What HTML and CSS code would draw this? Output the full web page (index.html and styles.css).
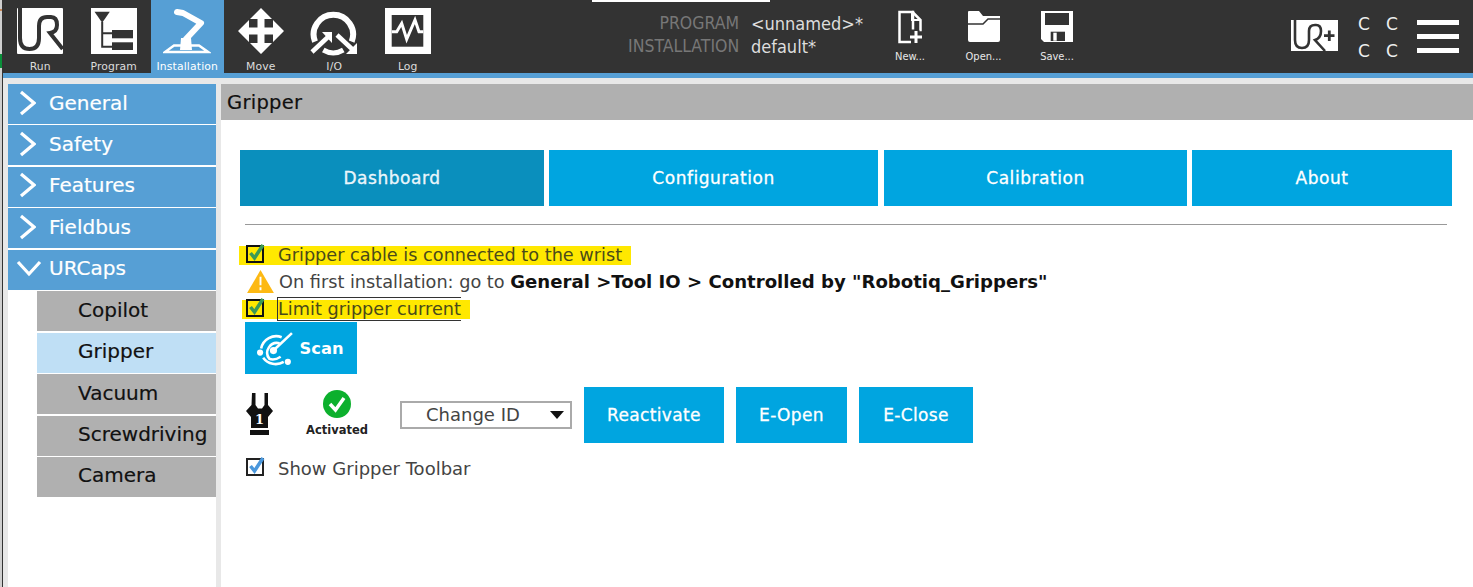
FILE: index.html
```html
<!DOCTYPE html>
<html lang="en">
<head>
<meta charset="utf-8">
<title>Gripper</title>
<link rel="stylesheet" href="styles.css">
</head>
<body>
<div class="edge-mark edge-orange"></div>
<div class="edge-mark edge-green"></div>
<div class="app">
  <div class="top-notch"></div>
  <header class="header">
    <nav class="nav">
      <a class="nav-tab">
        <svg class="nav-icon" viewBox="0 0 48 48"><rect x="1" width="46" height="46" rx="1" fill="#fff"/><path d="M4 0V30Q4 41 13.500 41Q23 41 23 30V18Q23 9 31 9H35Q41 9 41 17Q41 24 34 25L46.700 41" fill="none" stroke="#333" stroke-width="4"/></svg>
        <span>Run</span>
      </a>
      <a class="nav-tab">
        <svg class="nav-icon" viewBox="0 0 48 48"><rect x="1" width="46" height="46" fill="#fff"/><path d="M4.500 3.700H19.800L12.200 14.700Z" fill="#333"/><path d="M12.200 14V38.700H22M12.200 25.300H22" fill="none" stroke="#333" stroke-width="2"/><rect x="22" y="22" width="21" height="8.300" fill="#333"/><rect x="22" y="34.300" width="21" height="7.700" fill="#333"/></svg>
        <span>Program</span>
      </a>
      <a class="nav-tab active">
        <svg class="nav-icon" viewBox="0 0 48 48"><path d="M2 44H45L36 37.500H11Z" fill="none" stroke="#fff" stroke-width="2.500"/><path d="M18 30H28L29 42H17Z" fill="#fff"/><path d="M23 31L38 15L20 5L14 4" fill="none" stroke="#fff" stroke-width="6" stroke-linejoin="round" stroke-linecap="round"/></svg>
        <span>Installation</span>
      </a>
      <a class="nav-tab">
        <svg class="nav-icon" viewBox="0 0 48 48"><path d="M24 0L35 11H27.500V19.500H36V12L47 23L36 34V26.500H27.500V35H35L24 46L13 35H20.500V26.500H12V34L1 23L12 12V19.500H20.500V11H13Z" fill="#fff"/></svg>
        <span>Move</span>
      </a>
      <a class="nav-tab">
        <svg class="nav-icon" viewBox="0 0 48 48"><path d="M5 33.700A19.700 19.700 0 1 1 41.700 33.700" fill="none" stroke="#fff" stroke-width="6"/><path d="M13.300 42A19.700 19.700 0 0 0 33.300 42" fill="none" stroke="#fff" stroke-width="5"/><path d="M2 44L18 29" stroke="#fff" stroke-width="4.500"/><path d="M12 24H22V35Z" fill="#fff"/><path d="M27 27L42 41" stroke="#fff" stroke-width="4.500"/><path d="M47 35V46H36Z" fill="#fff"/></svg>
        <span>I/O</span>
      </a>
      <a class="nav-tab">
        <svg class="nav-icon" viewBox="0 0 48 48"><rect x="1" width="46" height="46" fill="#fff"/><rect x="7.700" y="7" width="31.600" height="31.700" fill="#333"/><path d="M7.700 23.700H12.700L17.700 15.300L22.700 31.300L31 12L35 23.700H39.300" fill="none" stroke="#fff" stroke-width="3"/></svg>
        <span>Log</span>
      </a>
    </nav>
    <div class="names">
      <div class="name-row"><span class="name-key">PROGRAM</span><span class="name-val">&lt;unnamed&gt;*</span></div>
      <div class="name-row"><span class="name-key">INSTALLATION</span><span class="name-val">default*</span></div>
    </div>
    <div class="files">
      <a class="file-btn">
        <svg class="file-icon" viewBox="0 0 24 34"><path d="M15 19.500V2H1.500V32H13" fill="none" stroke="#fff" stroke-width="2.500"/><path d="M14 1.500L22.500 10V20H21.500" fill="none" stroke="#fff" stroke-width="2.500"/><path d="M14 3V10H22" fill="none" stroke="#fff" stroke-width="2"/><path d="M18 21V33M12 27H24" stroke="#fff" stroke-width="3"/></svg>
        <span>New...</span>
      </a>
      <a class="file-btn">
        <svg class="file-icon" viewBox="0 0 34 34"><path d="M1 2Q1 1 2 1H12L16 6H33V30Q33 32 31 32H3Q1 32 1 30Z" fill="#fff"/><path d="M1 14H16L21 9H33" fill="none" stroke="#333" stroke-width="1.500"/></svg>
        <span>Open...</span>
      </a>
      <a class="file-btn">
        <svg class="file-icon" viewBox="0 0 34 34"><path d="M1 1H33V32H4L1 29Z" fill="#fff"/><rect x="5" y="3" width="24" height="12" fill="#333"/><rect x="10.700" y="21.700" width="14.300" height="9.300" fill="#333"/><rect x="13.300" y="22.700" width="3.400" height="8" fill="#fff"/></svg>
        <span>Save...</span>
      </a>
    </div>
    <div class="sys">
      <svg class="urplus" viewBox="0 0 48 33"><rect width="47" height="31" fill="#fff"/><path d="M4 0V20Q4 28 11 28Q18 28 18 20V11Q18 5 24 5H25Q30 5 30 11Q30 18 24 20L34 31" fill="none" stroke="#333" stroke-width="2.600"/><path d="M38.300 10.500V21M33 15.700H43.500" stroke="#333" stroke-width="2.800"/></svg>
      <div class="cc"><span>C</span><span>C</span><span>C</span><span>C</span></div>
      <div class="burger"><i></i><i></i><i></i></div>
    </div>
  </header>
  <div class="strip"></div>
  <div class="workspace">
    <aside class="side">
      <a class="side-item"><svg class="chev" viewBox="0 0 18 26"><path d="M3 2L16 13L3 24" fill="none" stroke="#fff" stroke-width="3.200"/></svg>General</a>
      <a class="side-item"><svg class="chev" viewBox="0 0 18 26"><path d="M3 2L16 13L3 24" fill="none" stroke="#fff" stroke-width="3.200"/></svg>Safety</a>
      <a class="side-item"><svg class="chev" viewBox="0 0 18 26"><path d="M3 2L16 13L3 24" fill="none" stroke="#fff" stroke-width="3.200"/></svg>Features</a>
      <a class="side-item"><svg class="chev" viewBox="0 0 18 26"><path d="M3 2L16 13L3 24" fill="none" stroke="#fff" stroke-width="3.200"/></svg>Fieldbus</a>
      <a class="side-item"><svg class="chev-down" viewBox="0 0 26 18"><path d="M2 3L13 15L24 3" fill="none" stroke="#fff" stroke-width="3.200"/></svg>URCaps</a>
      <a class="sub-item">Copilot</a>
      <a class="sub-item current">Gripper</a>
      <a class="sub-item">Vacuum</a>
      <a class="sub-item">Screwdriving</a>
      <a class="sub-item">Camera</a>
    </aside>
    <main class="main">
      <h1 class="title">Gripper</h1>
      <div class="panel">
        <div class="tabs">
          <a class="tab tab-1 selected">Dashboard</a>
          <a class="tab tab-2">Configuration</a>
          <a class="tab tab-3">Calibration</a>
          <a class="tab tab-4">About</a>
        </div>
        <hr class="rule">
        <div class="line line-a">
          <span class="mark wide">
            <svg class="check" viewBox="0 0 20 22"><rect x="1" y="4" width="16" height="16" fill="none" stroke="#111" stroke-width="2"/><path d="M4.500 11L8.500 16L17 3" fill="none" stroke="#3c9a55" stroke-width="3.500"/></svg>
            <span>Gripper cable is connected to the wrist</span>
          </span>
        </div>
        <div class="line line-b">
          <svg class="warn" viewBox="0 0 28 24"><path d="M14 0L28 24H0Z" fill="#fdb913"/><path d="M14 7V16M14 18V21" stroke="#fff" stroke-width="2"/></svg>
          <span>On first installation: go to <b>General &gt;Tool IO &gt; Controlled by "Robotiq_Grippers"</b></span>
        </div>
        <div class="line line-c">
          <span class="mark narrow">
            <svg class="check" viewBox="0 0 20 22"><rect x="1" y="4" width="16" height="16" fill="none" stroke="#111" stroke-width="2"/><path d="M4.500 11L8.500 16L17 3" fill="none" stroke="#3c9a55" stroke-width="3.500"/></svg>
            <span class="focus">Limit gripper current</span>
          </span>
        </div>
        <a class="btn scan">
          <svg class="scan-icon" viewBox="0 0 36 36"><path d="M34 3L17 19" stroke="#fff" stroke-width="2.500"/><circle cx="16" cy="20" r="3.500" fill="#fff"/><path d="M24 7A15 15 0 0 0 4 18M6 27A15 15 0 0 0 26 31" fill="none" stroke="#fff" stroke-width="2.500"/><path d="M22 13A9.500 9.500 0 0 0 12 28Q17 30 23 26" fill="none" stroke="#fff" stroke-width="2.500"/><circle cx="3" cy="22" r="3" fill="#fff"/><circle cx="30" cy="31" r="3" fill="#fff"/></svg>
          <span>Scan</span>
        </a>
        <div class="controls">
          <svg class="gripper" viewBox="0 0 28 44"><path d="M6 0H9.500V12L12 15.500H16L18.500 12V0H22V12L27 18L22 24V35H5V24L0 18L5.500 12Z" fill="#111"/><rect x="4" y="37" width="19" height="5" fill="#111"/><text x="13.500" y="31" class="grip-num">1</text></svg>
          <div class="status">
            <svg class="ok" viewBox="0 0 28 28"><circle cx="14" cy="14" r="14" fill="#0cb02d"/><path d="M7 14L12.500 20L21 8" fill="none" stroke="#fff" stroke-width="3.500"/></svg>
            <span>Activated</span>
          </div>
          <div class="select"><span>Change ID</span><i class="caret"></i></div>
          <a class="btn act act-1">Reactivate</a>
          <a class="btn act act-2">E-Open</a>
          <a class="btn act act-3">E-Close</a>
        </div>
        <div class="line line-d">
          <svg class="check" viewBox="0 0 20 22"><rect x="1" y="4" width="16" height="16" fill="none" stroke="#222" stroke-width="2"/><path d="M4.500 11L8.500 16L17 3" fill="none" stroke="#4a97dc" stroke-width="3.500"/></svg>
          <span>Show Gripper Toolbar</span>
        </div>
      </div>
    </main>
  </div>
</div>
</body>
</html>
```
FILE: styles.css
```css
* { box-sizing: border-box; }
html, body { margin: 0; height: 100%; overflow: hidden; }
body { background: #cfcfcf; font-family: "DejaVu Sans", sans-serif; position: relative; }
.edge-mark { position: absolute; left: 0; width: 2px; }
.edge-orange { top: 9px; height: 2px; background: #c98a5a; }
.edge-green { top: 54px; height: 14px; background: #0a8f3a; }
.app { position: relative; width: 1471px; height: 587px; margin-left: 2px; border-left: 1px solid #333; display: flex; flex-direction: column; background: #fff; }
.top-notch { position: absolute; left: 589px; top: 0; width: 178px; height: 2px; background: #fff; }

.header { height: 73px; background: #333; display: flex; flex: none; }
.nav { display: flex; padding-left: 0.500px; }
.nav-tab { width: 73.500px; height: 73px; display: flex; flex-direction: column; align-items: center; padding-top: 8px; color: #ddd; font-size: 10.800px; }
.nav-tab span { margin-top: 4px; line-height: 13px; white-space: nowrap; letter-spacing: .15px; }
.nav-tab.active { background: #569fd5; color: #fff; }
.nav-icon { width: 48px; height: 48px; flex: none; }

.names { margin-left: 183.500px; width: 235px; padding-top: 13px; font-family: "DejaVu Sans Condensed", "DejaVu Sans", sans-serif; font-size: 18px; flex: none; }
.name-row { display: flex; height: 22.500px; line-height: 21px; }
.name-key { width: 111px; margin-right: 12px; text-align: right; color: #777; white-space: nowrap; font-size: 17.500px; }
.name-val { color: #ddd; white-space: nowrap; }

.files { display: flex; width: 220.500px; margin-left: 10.250px; flex: none; }
.file-btn { width: 73.500px; display: flex; flex-direction: column; align-items: center; padding-top: 10px; color: #e8e8e8; font-size: 11px; font-family: "DejaVu Sans Condensed", "DejaVu Sans", sans-serif; }
.file-btn span { margin-top: 6px; line-height: 14px; }
.file-icon { width: 34px; height: 34px; flex: none; }

.sys { display: flex; margin-left: 197.250px; padding-top: 20px; flex: none; }
.urplus { width: 48px; height: 33px; }
.cc { display: grid; grid-template-columns: 28px 28px; grid-auto-rows: 27px; margin: -9px 0 0 19px; color: #eee; font-size: 17px; line-height: 27px; }
.burger { display: flex; flex-direction: column; gap: 9.500px; width: 42px; margin-left: 3px; }
.burger i { display: block; height: 4.500px; background: #fff; }

.strip { height: 5px; background: #569fd5; flex: none; }
.workspace { flex: 1; display: flex; background: #e8e8e8; padding-top: 6px; }

.side { width: 208px; margin-left: 5px; background: #fff; display: flex; flex-direction: column; align-items: flex-end; gap: 1.450px; flex: none; }
.side-item { width: 100%; height: 40px; background: #569fd5; color: #fff; display: flex; align-items: center; padding: 0 0 3px 10px; font-size: 20px; -webkit-text-stroke: .2px #fff; }
.chev { width: 18px; height: 26px; margin-right: 13px; }
.chev-down { width: 26px; height: 18px; margin-right: 7px; margin-left: -2px; }
.sub-item { width: 179px; height: 40px; background: #b0b0b0; color: #111; display: flex; align-items: center; padding: 0 0 3px 41px; font-size: 20px; white-space: nowrap; -webkit-text-stroke: .2px #111; }
.sub-item.current { background: #bfdff5; }

.main { flex: 1; margin-left: 5px; background: #fff; display: flex; flex-direction: column; min-width: 0; }
.title { margin: 0; height: 36px; background: #b0b0b0; color: #111; font-size: 19.500px; font-weight: 400; line-height: 37px; padding-left: 6px; letter-spacing: .3px; flex: none; -webkit-text-stroke: .2px #111; }
.panel { padding: 30px 21px 0 19px; display: flex; flex-direction: column; font-size: 17.700px; color: #444; }

.tabs { display: flex; height: 56px; }
.tab { background: #00a5e0; color: #fff; font-size: 17px; letter-spacing: .55px; display: flex; align-items: center; justify-content: center; -webkit-text-stroke: .3px #fff; }
.tab.selected { background: #0a8fbd; color: #e4f3fa; }
.tab-1 { width: 304px; }
.tab-2 { width: 329px; margin-left: 5px; }
.tab-3 { width: 303px; margin-left: 6px; }
.tab-4 { width: 260px; margin-left: 5px; }
.rule { border: 0; height: 1px; background: #999; margin: 18px 5px 0 5px; width: 1202px; }

.line { display: flex; align-items: center; white-space: nowrap; }
.line-a { margin: 20px 0 0 -1px; height: 20px; }
.line-b { margin: 3px 0 0 7px; height: 26px; }
.line-c { margin: 4px 0 0 2px; height: 22px; }
.line-d { margin: 14px 0 0 6px; height: 22px; font-size: 18px; }
.line-b b { color: #111; font-size: 18.100px; }
.line-b .warn { margin-right: 5px; }
.warn { width: 27px; height: 23px; flex: none; }
.mark { display: inline-flex; align-items: center; background: #ffe800; height: 19px; padding-right: 9px; color: #4a4a1a; }
.wide { padding-left: 7px; }
.narrow { padding-left: 4px; padding-right: 9px; }
.check { width: 20px; height: 22px; flex: none; margin-right: 12px; margin-top: -4px; }
.focus { border: 1px solid #333; border-right: 0; margin-left: -1px; line-height: 22px; height: 24px; }

.btn { background: #00a5e0; color: #fff; font-size: 17px; display: flex; align-items: center; justify-content: center; }
.scan { width: 112px; height: 52px; margin: 2px 0 0 5px; gap: 6px; padding-right: 2px; font-weight: 700; font-size: 16.300px; }
.scan-icon { width: 37px; height: 37px; }
.controls { display: flex; align-items: flex-start; height: 56px; margin: 13px 0 0 6px; }
.gripper { width: 28px; height: 44px; margin-top: 6px; flex: none; }
.grip-num { font-family: "DejaVu Serif", serif; font-weight: 700; font-size: 13px; fill: #fff; text-anchor: middle; }
.status { width: 126px; display: flex; flex-direction: column; align-items: center; padding-top: 3px; font-size: 11.500px; font-weight: 700; color: #222; }
.status span { margin-top: 5px; line-height: 14px; }
.ok { width: 28px; height: 28px; }
.select { width: 172px; height: 28px; margin-top: 14px; border: 2px solid #aaa; display: flex; align-items: center; justify-content: space-between; padding: 0 6px 2px 24px; color: #444; font-size: 18px; }
.caret { width: 0; height: 0; border: 7.500px solid transparent; border-top: 8px solid #111; border-bottom: 0; margin-top: 2px; }
.act { height: 56px; padding-bottom: 1px; letter-spacing: .35px; -webkit-text-stroke: .3px #fff; }
.act-1 { width: 140px; margin-left: 12px; }
.act-2 { width: 111px; margin-left: 12px; }
.act-3 { width: 114px; margin-left: 12px; }
```
